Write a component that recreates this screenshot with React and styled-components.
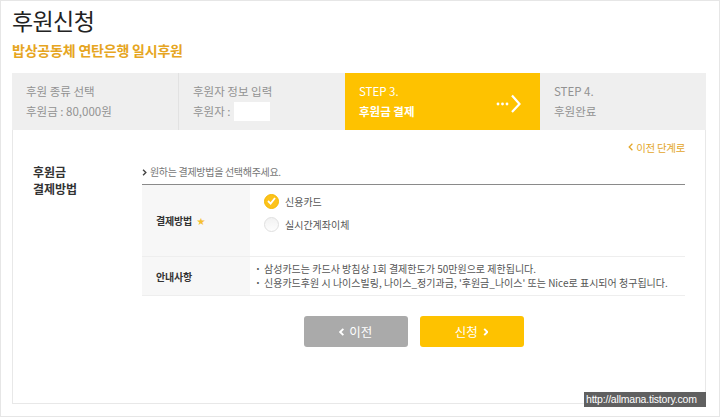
import React from "react";
import styled, { createGlobalStyle } from "styled-components";

const Global = createGlobalStyle`
  html, body { margin: 0; padding: 0; background: #fff; }
  body { font-family: "Noto Sans CJK KR", "Noto Sans", sans-serif; color: #333; }
  * { box-sizing: border-box; }
`;

const Frame = styled.div`
  position: relative;
  width: 720px;
  height: 417px;
  border: 1px solid #e6e6e6;
  padding: 0 13px 0 11px;
  overflow: hidden;
`;

const Title = styled.h1`
  margin: 3px 0 0 0;
  font-size: 23px;
  line-height: 32px;
  font-weight: 400;
  color: #222;
  letter-spacing: -0.6px;
`;

const SubTitle = styled.h2`
  margin: 4px 0 0 0;
  font-size: 14px;
  line-height: 20px;
  font-weight: 700;
  color: #e6a521;
  letter-spacing: -0.2px;
`;

const Box = styled.div`
  margin-top: 13px;
  border: 1px solid #e8e8e8;
  border-top: none;
`;

const Steps = styled.div`
  display: flex;
  height: 57px;
  background: #efefef;
  margin: 0 -1px;
`;

const Step = styled.div`
  width: ${(p) => p.$w}px;
  flex: none;
  padding: 8px 0 0 14px;
  background: ${(p) => (p.$active ? "#fec200" : "#efefef")};
  border-left: ${(p) => (p.$divider ? "1px solid #e2e2e2" : "none")};
  color: ${(p) => (p.$active ? "#fff" : "#929292")};
  font-size: 11.5px;
  line-height: 20px;
  display: flex;
  align-items: flex-start;
  justify-content: space-between;
`;

const StepText = styled.div`
  display: flex;
  flex-direction: column;
`;

const StepLine = styled.span`
  font-weight: ${(p) => (p.$bold ? 700 : 400)};
  display: flex;
  align-items: center;
`;

const Blank = styled.span`
  display: inline-block;
  width: 36px;
  height: 19px;
  background: #fff;
  margin-left: 3px;
`;

const ArrowWrap = styled.div`
  margin: 13px 18px 0 0;
`;

const Body = styled.div`
  padding: 9px 20px 56px 20px;
`;

const BackLinkRow = styled.div`
  display: flex;
  justify-content: flex-end;
  height: 16px;
  align-items: center;
`;

const BackLink = styled.a`
  font-size: 10.5px;
  color: #e3a62a;
  text-decoration: none;
  display: flex;
  align-items: center;
  gap: 3px;
  letter-spacing: -0.3px;
`;

const Section = styled.div`
  display: grid;
  grid-template-columns: 109px 1fr;
  margin-top: 9px;
`;

const SectionLabel = styled.div`
  display: flex;
  flex-direction: column;
  font-size: 12px;
  line-height: 17px;
  font-weight: 700;
  color: #333;
  margin-top: -1px;
  letter-spacing: 0;
`;

const Guide = styled.div`
  font-size: 10px;
  line-height: 16px;
  color: #777;
  display: flex;
  align-items: center;
  gap: 3px;
  letter-spacing: -0.3px;
`;

const Table = styled.div`
  margin-top: 4px;
  border-top: 1px solid #8a8a8a;
`;

const Row = styled.div`
  display: grid;
  grid-template-columns: 108px 1fr;
  height: ${(p) => p.$h}px;
  border-bottom: 1px solid #eeeeee;
`;

const Th = styled.div`
  background: #f7f7f7;
  display: flex;
  align-items: center;
  padding-left: 14px;
  font-size: 10px;
  font-weight: 700;
  color: #333;
  letter-spacing: -0.2px;
`;

const Star = styled.span`
  color: #f5c030;
  font-size: 8px;
  margin-left: 5px;
`;

const Td = styled.div`
  padding: ${(p) => p.$pad};
  display: flex;
  flex-direction: column;
  justify-content: ${(p) => (p.$center ? "center" : "flex-start")};
  gap: ${(p) => p.$gap || 0}px;
`;

const Option = styled.label`
  display: flex;
  align-items: center;
  gap: 6px;
  height: 16px;
  font-size: 10px;
  color: #555;
`;

const Radio = styled.span`
  width: 15px;
  height: 15px;
  border-radius: 50%;
  flex: none;
  display: flex;
  align-items: center;
  justify-content: center;
  background: ${(p) => (p.$checked ? "#fcc21b" : "linear-gradient(#f2f2f2, #fdfdfd)")};
  border: 1px solid ${(p) => (p.$checked ? "#f5b800" : "#e0e0e0")};
`;

const Bullet = styled.div`
  font-size: 10px;
  line-height: 14px;
  color: #555;
  display: flex;
  white-space: nowrap;
  &::before {
    content: "·";
    font-weight: 700;
    width: 9px;
    margin-left: 5px;
  }
`;

const Buttons = styled.div`
  grid-column: 2;
  display: flex;
  justify-content: center;
  gap: 12px;
  margin-top: 20px;
`;

const Button = styled.button`
  width: 104px;
  height: 31px;
  border: none;
  border-radius: 3px;
  background: ${(p) => (p.$primary ? "#fec200" : "#aaaaaa")};
  color: #fff;
  font-family: inherit;
  font-size: 12.5px;
  display: flex;
  align-items: center;
  justify-content: center;
  gap: 5px;
  padding: 0;
`;

const Watermark = styled.div`
  position: absolute;
  right: 13px;
  bottom: 9px;
  width: 122px;
  height: 15px;
  background: #606060;
  color: #fff;
  font-family: "Liberation Sans", Arial, sans-serif;
  font-size: 10.5px;
  line-height: 15px;
  padding-left: 2px;
  letter-spacing: -0.2px;
  white-space: nowrap;
`;

const Chevron = ({ dir = "right", size = 8, color = "#fff", sw = 2 }) => (
  <svg width={size * 0.7} height={size} viewBox="0 0 7 10">
    <path
      d={dir === "right" ? "M1.5 1 L5.5 5 L1.5 9" : "M5.5 1 L1.5 5 L5.5 9"}
      fill="none"
      stroke={color}
      strokeWidth={sw}
    />
  </svg>
);

const StepArrow = () => (
  <svg width="26" height="19" viewBox="0 0 26 19">
    <circle cx="2" cy="10" r="1.4" fill="#fff" />
    <circle cx="6.5" cy="10" r="1.4" fill="#fff" />
    <circle cx="11" cy="10" r="1.4" fill="#fff" />
    <path d="M16 1.5 L23.5 10 L16 18" fill="none" stroke="#fff" strokeWidth="2.2" />
  </svg>
);

const Check = () => (
  <svg width="9" height="8" viewBox="0 0 9 8">
    <path d="M1 4 L3.6 6.6 L8 1" fill="none" stroke="#fff" strokeWidth="1.8" />
  </svg>
);

export default function App() {
  return (
    <>
      <Global />
      <Frame>
        <Title>후원신청</Title>
        <SubTitle>밥상공동체 연탄은행 일시후원</SubTitle>
        <Box>
          <Steps>
            <Step $w={166}>
              <StepText>
                <StepLine>후원 종류 선택</StepLine>
                <StepLine>후원금 : 80,000원</StepLine>
              </StepText>
            </Step>
            <Step $w={167} $divider>
              <StepText>
                <StepLine>후원자 정보 입력</StepLine>
                <StepLine>
                  후원자 :<Blank />
                </StepLine>
              </StepText>
            </Step>
            <Step $w={195} $active>
              <StepText>
                <StepLine>STEP 3.</StepLine>
                <StepLine $bold>후원금 결제</StepLine>
              </StepText>
              <ArrowWrap>
                <StepArrow />
              </ArrowWrap>
            </Step>
            <Step $w={166}>
              <StepText>
                <StepLine>STEP 4.</StepLine>
                <StepLine>후원완료</StepLine>
              </StepText>
            </Step>
          </Steps>
          <Body>
            <BackLinkRow>
              <BackLink href="#">
                <Chevron dir="left" size={8} color="#e3a62a" sw={1.6} />
                이전 단계로
              </BackLink>
            </BackLinkRow>
            <Section>
              <SectionLabel>
                <span>후원금</span>
                <span>결제방법</span>
              </SectionLabel>
              <div>
                <Guide>
                  <Chevron size={7} color="#444" sw={2} />
                  원하는 결제방법을 선택해주세요.
                </Guide>
                <Table>
                  <Row $h={72}>
                    <Th>
                      결제방법<Star>★</Star>
                    </Th>
                    <Td $pad="8px 0 0 14px" $gap={7}>
                      <Option>
                        <Radio $checked>
                          <Check />
                        </Radio>
                        신용카드
                      </Option>
                      <Option>
                        <Radio />
                        실시간계좌이체
                      </Option>
                    </Td>
                  </Row>
                  <Row $h={39}>
                    <Th>안내사항</Th>
                    <Td $pad="0" $center>
                      <Bullet>삼성카드는 카드사 방침상 1회 결제한도가 50만원으로 제한됩니다.</Bullet>
                      <Bullet>
                        신용카드후원 시 나이스빌링, 나이스_정기과금, '후원금_나이스' 또는 Nice로 표시되어 청구됩니다.
                      </Bullet>
                    </Td>
                  </Row>
                </Table>
              </div>
              <Buttons>
                <Button>
                  <Chevron dir="left" size={8} sw={2.4} />
                  이전
                </Button>
                <Button $primary>
                  신청
                  <Chevron size={8} sw={2.4} />
                </Button>
              </Buttons>
            </Section>
          </Body>
        </Box>
        <Watermark>http://allmana.tistory.com</Watermark>
      </Frame>
    </>
  );
}
